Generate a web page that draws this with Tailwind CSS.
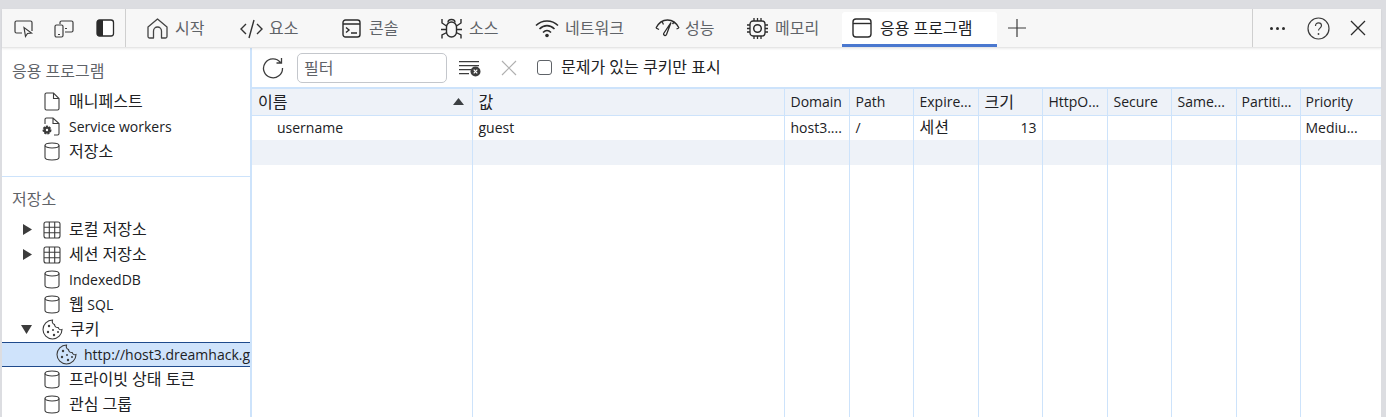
<!DOCTYPE html>
<html lang="ko">
<head>
  <meta charset="UTF-8" />
  <title>DevTools - 응용 프로그램</title>
  <script src="https://cdn.jsdelivr.net/npm/@tailwindcss/browser@4"></script>
</head>
<body class="w-[1386px] h-[417px] overflow-hidden bg-[#dcdde1] pt-[9px] pl-[2px] pr-[5px] text-[14px] text-[#202124] font-['Open_Sans','Noto_Sans_CJK_KR',sans-serif]">

  <!-- tab bar -->
  <div class="h-[39px] bg-[#f7f7f7] flex items-center text-[#5f6368] border-b border-[#e6e6e6] relative z-10 shadow-[0_1px_2px_rgba(0,0,0,0.08)]">
    <div class="w-[124px] h-full flex items-center border-r border-[#cfcfcf]">
      <svg class="ml-[11px] w-[22px] h-[22px]" viewBox="0 0 22 22" fill="none" stroke="#3c3c3c" stroke-width="1.2"><path d="M9 16H3.500a1.500 1.500 0 0 1-1.500-1.500V5.500A1.500 1.500 0 0 1 3.500 4h14A1.500 1.500 0 0 1 19 5.500V14"/><path d="M11 10.500l1.500 9 2-3 4 -.5z"/></svg>
      <svg class="ml-[18px] w-[22px] h-[22px]" viewBox="0 0 22 22" fill="none" stroke="#3c3c3c" stroke-width="1.200"><path d="M7 7V5.500A1.500 1.500 0 0 1 8.500 4h10A1.500 1.500 0 0 1 20 5.500v8a1.500 1.500 0 0 1-1.500 1.500H12"/><rect x="2" y="8" width="8" height="12" rx="1.500"/><path d="M5 17.500h2M12 11.500h2"/></svg>
      <svg class="ml-[20px] w-[20px] h-[20px]" viewBox="0 0 20 20"><rect x="2" y="2" width="16.500" height="16" rx="2.500" fill="#fff" stroke="#2b2b2b" stroke-width="1.300"/><path d="M4.500 2H8v16H4.500A2.500 2.500 0 0 1 2 15.500v-11A2.500 2.500 0 0 1 4.500 2z" fill="#2b2b2b"/></svg>
    </div>

    <div class="flex items-center h-full w-[94px] pl-[20px] gap-[6px]">
      <svg class="w-[23px] h-[23px] shrink-0" viewBox="0 0 23 23" fill="none" stroke="#444" stroke-width="1.300"><path d="M11.500 2L2 10v9.500A1.500 1.500 0 0 0 3.500 21h4v-7a4 4 0 0 1 8 0v7h4a1.500 1.500 0 0 0 1.500-1.500V10z" stroke-linejoin="round"/></svg>
      <span class="text-[16px]">시작</span>
    </div>
    <div class="flex items-center h-full w-[102px] pl-[20px] gap-[6px]">
      <svg class="w-[23px] h-[23px] shrink-0" viewBox="0 0 23 23" fill="none" stroke="#333" stroke-width="1.400"><path d="M6 7l-5 5 5 5M17 7l5 5-5 5M14 3L9 21"/></svg>
      <span class="text-[16px]">요소</span>
    </div>
    <div class="flex items-center h-full w-[99px] pl-[20px] gap-[8px]">
      <svg class="w-[19px] h-[19px] shrink-0" viewBox="0 0 19 19" fill="none" stroke="#2b2b2b" stroke-width="1.400"><rect x="1" y="1" width="17" height="17" rx="2.500"/><path d="M1 5h17M4 8.500l3 2.500-3 2.500M9 14h6"/></svg>
      <span class="text-[16px]">콘솔</span>
    </div>
    <div class="flex items-center h-full w-[94px] pl-[19px] gap-[6px]">
      <svg class="w-[23px] h-[23px] shrink-0" viewBox="0 0 23 23" fill="none" stroke="#2b2b2b" stroke-width="1.400"><rect x="6.500" y="5" width="10" height="15" rx="5"/><path d="M8 5.500C8 3.500 9.500 2.500 11.500 2.500S15 3.500 15 5.500M2 2v4l4.500 3M21 2v4l-4.500 3M1 12.500h5.500M22 12.500h-5.500M2 21.500V18l4.800-2.500M21 21.500V18l-4.800-2.500"/></svg>
      <span class="text-[16px]">소스</span>
    </div>
    <div class="flex items-center h-full w-[120px] pl-[20px] gap-[6px]">
      <svg class="w-[24px] h-[20px] shrink-0" viewBox="0 0 24 20" fill="none" stroke="#2b2b2b" stroke-width="1.600"><path d="M1 7.500C7 1.500 17 1.500 23 7.500M4.500 11C9 6.500 15 6.500 19.500 11M8 14.500c2.500-2.500 5.500-2.500 8 0"/><circle cx="12" cy="17.500" r="1.800" fill="#2b2b2b" stroke="none"/></svg>
      <span class="text-[16px]">네트워크</span>
    </div>
    <div class="flex items-center h-full w-[91px] pl-[20px] gap-[5px]">
      <svg class="w-[25px] h-[20px] shrink-0" viewBox="0 0 25 20" fill="none" stroke="#2b2b2b" stroke-width="1.300"><path d="M1 10C4 4 8 2 12.500 2S21 4 24 10M1 10l3 1.500M24 10l-2.500 1M7 3.500l1.500 3M19 4l-1.500 2"/><path d="M16 4.500L11.500 16.500c-.8 1.800-3.500 .8-2.800-1z" fill="#fff"/></svg>
      <span class="text-[16px]">성능</span>
    </div>
    <div class="flex items-center h-full w-[116px] pl-[20px] gap-[6px]">
      <svg class="w-[23px] h-[23px] shrink-0" viewBox="0 0 23 23" fill="none" stroke="#2b2b2b" stroke-width="1.300"><rect x="4" y="4" width="15" height="15" rx="3"/><circle cx="11.500" cy="11.500" r="3.800" stroke-width="1.500"/><path d="M8 1v3M11.500 1v3M15 1v3M8 19v3M11.500 19v3M15 19v3M1 8h3M1 11.500h3M1 15h3M19 8h3M19 11.500h3M19 15h3"/></svg>
      <span class="text-[16px]">메모리</span>
    </div>
    <div class="self-end flex items-center w-[155px] h-[35px] bg-white rounded-t-[3px] border-b-[3px] border-[#4a78cf] pl-[10px] gap-[8px] text-[#202124]">
      <svg class="w-[20px] h-[20px] shrink-0" viewBox="0 0 20 20" fill="none" stroke="#2b2b2b" stroke-width="1.400"><rect x="1" y="1" width="18" height="18" rx="3"/><path d="M1 5.500h18"/></svg>
      <span class="text-[16px]">응용 프로그램</span>
    </div>
    <svg class="ml-[11px] w-[18px] h-[18px]" viewBox="0 0 18 18" stroke="#3c3c3c" stroke-width="1.200"><path d="M9 0v18M0 9h18"/></svg>
    <div class="ml-[226px] w-px h-full bg-[#cfcfcf]"></div>
    <div class="ml-[17px] flex gap-[3px]">
      <span class="w-[3px] h-[3px] rounded-full bg-[#2b2b2b]"></span>
      <span class="w-[3px] h-[3px] rounded-full bg-[#2b2b2b]"></span>
      <span class="w-[3px] h-[3px] rounded-full bg-[#2b2b2b]"></span>
    </div>
    <svg class="ml-[22px] w-[23px] h-[23px]" viewBox="0 0 23 23" fill="none" stroke="#3c3c3c" stroke-width="1.200"><circle cx="11.500" cy="11.500" r="10.500"/><path d="M8.500 9c0-2 1.300-3.200 3-3.200s3 1.200 3 2.800c0 2.500-3 2.500-3 5"/><circle cx="11.500" cy="17" r=".9" fill="#3c3c3c" stroke="none"/></svg>
    <svg class="ml-[20px] w-[16px] h-[16px]" viewBox="0 0 16 16" stroke="#2b2b2b" stroke-width="1.300"><path d="M1 1l14 14M15 1L1 15"/></svg>
  </div>

  <div class="flex h-[369px] bg-white">
    <!-- sidebar -->
    <div class="w-[248px] shrink-0 overflow-hidden whitespace-nowrap">
      <div class="h-[41px] pl-[10px] pt-[11px] text-[#5f6368] text-[16px]">응용 프로그램</div>
      <div class="h-[25px] flex items-center pl-[42px] gap-[9px]">
        <svg class="w-[16px] h-[19px] shrink-0" viewBox="0 0 16 19" fill="none" stroke="#3c3c3c" stroke-width="1.100"><path d="M2.500 1H9.500L15 6.500V16.500a1.500 1.500 0 0 1-1.500 1.500h-11A1.500 1.500 0 0 1 1 16.500v-14A1.500 1.500 0 0 1 2.500 1zM9.500 1v5.500H15"/></svg>
        <span class="text-[16px] pb-[2px]">매니페스트</span>
      </div>
      <div class="h-[25px] flex items-center pl-[39px] gap-[9px]">
        <svg class="w-[19px] h-[19px] shrink-0" viewBox="0 0 19 19" fill="none" stroke="#3c3c3c" stroke-width="1.100"><path d="M4 7V2.500A1.500 1.500 0 0 1 5.500 1H12l6 5.500v10a1.500 1.500 0 0 1-1.500 1.500H13M12 1v5.500h6"/><circle cx="6" cy="13" r="3.500" fill="#3c3c3c" stroke="#3c3c3c" stroke-width="2" stroke-dasharray="2 1"/><circle cx="6" cy="13" r="1.200" fill="#fff" stroke="none"/></svg>
        <span>Service workers</span>
      </div>
      <div class="h-[25px] flex items-center pl-[42px] gap-[9px]">
        <svg class="w-[16px] h-[19px] shrink-0" viewBox="0 0 16 19" fill="none" stroke="#3c3c3c" stroke-width="1.100"><ellipse cx="8" cy="3.500" rx="7" ry="2.500"/><path d="M1 3.500V15.500C1 17 4 18 8 18s7-1 7-2.500V3.500"/></svg>
        <span class="text-[16px] pb-[2px]">저장소</span>
      </div>
      <div class="mt-[12px] h-px bg-[#cde3fb]"></div>
      <div class="h-[40px] pl-[10px] pt-[10px] text-[#5f6368] text-[16px]">저장소</div>
      <div class="h-[25px] flex items-center pl-[21px]">
        <svg class="w-[9px] h-[11px] shrink-0" viewBox="0 0 9 11" fill="#3c3c3c"><path d="M0 0l9 5.500L0 11z"/></svg>
        <svg class="ml-[11px] w-[18px] h-[18px] shrink-0" viewBox="0 0 18 18" fill="none" stroke="#3c3c3c" stroke-width="1.100"><rect x="1" y="1" width="16" height="16" rx="2"/><path d="M6.300 1v16M11.700 1v16M1 6.300h16M1 11.700h16"/></svg>
        <span class="ml-[8px] text-[16px] pb-[2px]">로컬 저장소</span>
      </div>
      <div class="h-[25px] flex items-center pl-[21px]">
        <svg class="w-[9px] h-[11px] shrink-0" viewBox="0 0 9 11" fill="#3c3c3c"><path d="M0 0l9 5.500L0 11z"/></svg>
        <svg class="ml-[11px] w-[18px] h-[18px] shrink-0" viewBox="0 0 18 18" fill="none" stroke="#3c3c3c" stroke-width="1.100"><rect x="1" y="1" width="16" height="16" rx="2"/><path d="M6.300 1v16M11.700 1v16M1 6.300h16M1 11.700h16"/></svg>
        <span class="ml-[8px] text-[16px] pb-[2px]">세션 저장소</span>
      </div>
      <div class="h-[25px] flex items-center pl-[42px] gap-[9px]">
        <svg class="w-[16px] h-[19px] shrink-0" viewBox="0 0 16 19" fill="none" stroke="#3c3c3c" stroke-width="1.100"><ellipse cx="8" cy="3.500" rx="7" ry="2.500"/><path d="M1 3.500V15.500C1 17 4 18 8 18s7-1 7-2.500V3.500"/></svg>
        <span>IndexedDB</span>
      </div>
      <div class="h-[25px] flex items-center pl-[42px] gap-[9px]">
        <svg class="w-[16px] h-[19px] shrink-0" viewBox="0 0 16 19" fill="none" stroke="#3c3c3c" stroke-width="1.100"><ellipse cx="8" cy="3.500" rx="7" ry="2.500"/><path d="M1 3.500V15.500C1 17 4 18 8 18s7-1 7-2.500V3.500"/></svg>
        <span class="pb-[2px]"><span class="text-[16px]">웹</span> SQL</span>
      </div>
      <div class="h-[25px] flex items-center pl-[19px]">
        <svg class="w-[11px] h-[9px] shrink-0" viewBox="0 0 11 9" fill="#3c3c3c"><path d="M0 0h11L5.500 9z"/></svg>
        <svg class="ml-[10px] w-[21px] h-[21px] shrink-0" viewBox="0 0 21 21" fill="none" stroke="#3c3c3c" stroke-width="1.100"><path d="M10.500 1a9.500 9.500 0 1 0 9.500 9.500c-2 .8-3.500-.5-3.800-2-2 .3-3.700-1-3.700-3C10.800 5 10 3 10.500 1z"/><g fill="#3c3c3c" stroke="none"><circle cx="7" cy="7" r="1.200"/><circle cx="6" cy="13" r="1.200"/><circle cx="11" cy="11" r="1"/><circle cx="12" cy="16" r="1.200"/><circle cx="16" cy="13" r="1"/></g></svg>
        <span class="ml-[7px] text-[16px] pb-[2px]">쿠키</span>
      </div>
      <div class="h-[25px] flex items-center pl-[54px] gap-[7px] bg-[#cfe3fb] border-y border-[#1f4a8c] overflow-hidden">
        <svg class="w-[21px] h-[21px] shrink-0" viewBox="0 0 21 21" fill="none" stroke="#3c3c3c" stroke-width="1.100"><path d="M10.500 1a9.500 9.500 0 1 0 9.500 9.500c-2 .8-3.500-.5-3.800-2-2 .3-3.700-1-3.700-3C10.800 5 10 3 10.500 1z"/><g fill="#3c3c3c" stroke="none"><circle cx="7" cy="7" r="1.200"/><circle cx="6" cy="13" r="1.200"/><circle cx="11" cy="11" r="1"/><circle cx="12" cy="16" r="1.200"/><circle cx="16" cy="13" r="1"/></g></svg>
        <span>http://host3.dreamhack.games:12345/</span>
      </div>
      <div class="h-[25px] flex items-center pl-[42px] gap-[9px]">
        <svg class="w-[16px] h-[19px] shrink-0" viewBox="0 0 16 19" fill="none" stroke="#3c3c3c" stroke-width="1.100"><ellipse cx="8" cy="3.500" rx="7" ry="2.500"/><path d="M1 3.500V15.500C1 17 4 18 8 18s7-1 7-2.500V3.500"/></svg>
        <span class="text-[16px] pb-[2px]">프라이빗 상태 토큰</span>
      </div>
      <div class="h-[25px] flex items-center pl-[42px] gap-[9px]">
        <svg class="w-[16px] h-[19px] shrink-0" viewBox="0 0 16 19" fill="none" stroke="#3c3c3c" stroke-width="1.100"><ellipse cx="8" cy="3.500" rx="7" ry="2.500"/><path d="M1 3.500V15.500C1 17 4 18 8 18s7-1 7-2.500V3.500"/></svg>
        <span class="text-[16px] pb-[2px]">관심 그룹</span>
      </div>
    </div>

    <!-- main -->
    <div class="flex-1 min-w-0 border-l-2 border-[#cde3fb]">
      <div class="h-[39px] flex items-center">
        <svg class="ml-[10px] w-[22px] h-[22px] shrink-0" viewBox="0 0 22 22" fill="none" stroke="#3c3c3c" stroke-width="1.300"><path d="M18.500 5.500A9.500 9.500 0 1 0 20.500 11M19.500 1v5h-5"/></svg>
        <div class="ml-[13px] w-[150px] h-[30px] border border-[#c4c7cc] rounded-[5px] flex items-center px-[6px] text-[#5f6368] text-[16px]">필터</div>
        <svg class="ml-[12px] w-[22px] h-[18px] shrink-0" viewBox="0 0 22 18" fill="#3c3c3c"><path d="M0 2h20v1.300H0zM0 6h20v1.300H0zM0 10h12v1.300H0zM0 14h10v1.300H0z"/><circle cx="16.500" cy="12.500" r="5"/><path d="M14.700 10.700l3.600 3.600M18.300 10.700l-3.600 3.600" stroke="#fff" stroke-width="1.200"/></svg>
        <svg class="ml-[20px] w-[16px] h-[16px] shrink-0" viewBox="0 0 16 16" stroke="#b0b0b0" stroke-width="1.200"><path d="M1 1l14 14M15 1L1 15"/></svg>
        <span class="ml-[20px] w-[15px] h-[15px] border border-[#5f6368] rounded-[3px] shrink-0"></span>
        <span class="ml-[9px] text-[16px] pb-[2px]">문제가 있는 쿠키만 표시</span>
      </div>
      <table class="table-fixed border-collapse w-[1129px] border-t-2 border-[#cde3fb]">
        <colgroup>
          <col class="w-[220px]" /><col class="w-[312px]" /><col class="w-[65px]" /><col class="w-[64px]" /><col class="w-[65px]" /><col class="w-[64px]" /><col class="w-[65px]" /><col class="w-[64px]" /><col class="w-[65px]" /><col class="w-[64px]" /><col />
        </colgroup>
        <tr class="h-[27px] bg-[#eef2f8] border-b border-[#cde3fb] text-left">
          <td class="px-[6px] border-r border-[#cde3fb]"><div class="flex items-center justify-between text-[16px]">이름<svg class="mr-[2px] w-[11px] h-[7px]" viewBox="0 0 11 7" fill="#3c4043"><path d="M5.500 0L11 7H0z"/></svg></div></td>
          <td class="px-[6px] border-r border-[#cde3fb] text-[16px]">값</td>
          <td class="px-[6px] border-r border-[#cde3fb] truncate">Domain</td>
          <td class="px-[6px] border-r border-[#cde3fb] truncate">Path</td>
          <td class="px-[6px] border-r border-[#cde3fb] truncate">Expire...</td>
          <td class="px-[6px] border-r border-[#cde3fb] text-[16px]">크기</td>
          <td class="px-[6px] border-r border-[#cde3fb] truncate">HttpO...</td>
          <td class="px-[6px] border-r border-[#cde3fb] truncate">Secure</td>
          <td class="px-[6px] border-r border-[#cde3fb] truncate">Same...</td>
          <td class="px-[5px] border-r border-[#cde3fb] truncate">Partiti...</td>
          <td class="px-[5px] truncate">Priority</td>
        </tr>
        <tr class="h-[25px]">
          <td class="pl-[25px] border-r border-[#cde3fb]">username</td>
          <td class="px-[6px] border-r border-[#cde3fb]">guest</td>
          <td class="px-[6px] border-r border-[#cde3fb] truncate">host3....</td>
          <td class="px-[6px] border-r border-[#cde3fb]">/</td>
          <td class="px-[6px] pb-[2px] leading-[20px] border-r border-[#cde3fb] text-[16px]">세션</td>
          <td class="px-[5px] border-r border-[#cde3fb] text-right">13</td>
          <td class="border-r border-[#cde3fb]"></td>
          <td class="border-r border-[#cde3fb]"></td>
          <td class="border-r border-[#cde3fb]"></td>
          <td class="border-r border-[#cde3fb]"></td>
          <td class="px-[5px] truncate">Mediu...</td>
        </tr>
        <tr class="h-[25px] bg-[#eef2f8]">
          <td class="border-r border-[#cde3fb]"></td><td class="border-r border-[#cde3fb]"></td><td class="border-r border-[#cde3fb]"></td><td class="border-r border-[#cde3fb]"></td><td class="border-r border-[#cde3fb]"></td><td class="border-r border-[#cde3fb]"></td><td class="border-r border-[#cde3fb]"></td><td class="border-r border-[#cde3fb]"></td><td class="border-r border-[#cde3fb]"></td><td class="border-r border-[#cde3fb]"></td><td></td>
        </tr>
        <tr class="h-[252px]">
          <td class="border-r border-[#cde3fb]"></td><td class="border-r border-[#cde3fb]"></td><td class="border-r border-[#cde3fb]"></td><td class="border-r border-[#cde3fb]"></td><td class="border-r border-[#cde3fb]"></td><td class="border-r border-[#cde3fb]"></td><td class="border-r border-[#cde3fb]"></td><td class="border-r border-[#cde3fb]"></td><td class="border-r border-[#cde3fb]"></td><td class="border-r border-[#cde3fb]"></td><td></td>
        </tr>
      </table>
    </div>
  </div>
</body>
</html>
